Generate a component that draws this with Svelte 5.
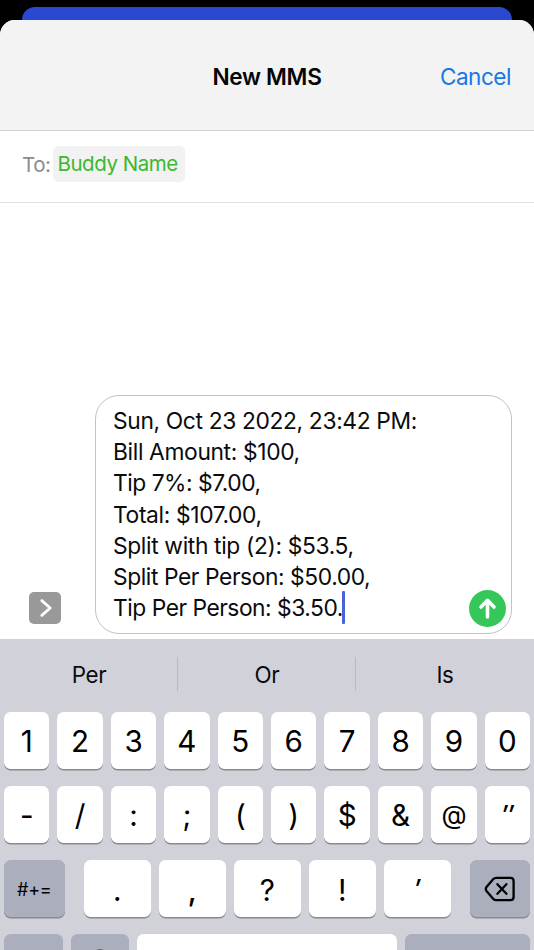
<script lang="ts">
    let message = [
        'Sun, Oct 23 2022, 23:42 PM:',
        'Bill Amount: $100,',
        'Tip 7%: $7.00,',
        'Total: $107.00,',
        'Split with tip (2): $53.5,',
        'Split Per Person: $50.00,',
        'Tip Per Person: $3.50.',
    ];

    let suggestions = ['Per', 'Or', 'Is'];

    let digits = ['1', '2', '3', '4', '5', '6', '7', '8', '9', '0'];
    let symbols = ['-', '/', ':', ';', '(', ')', '$', '&', '@', '″'];
    let punctuation = ['.', ',', '?', '!', '′'];
</script>

<main>
    <div class="behind"></div>

    <section class="sheet">
        <header>
            <span></span>
            <h1>New MMS</h1>
            <button class="cancel">Cancel</button>
        </header>

        <div class="recipient">
            <span class="to">To:</span>
            <span class="chip">Buddy Name</span>
        </div>

        <div class="compose">
            <button class="expand" aria-label="Show apps">
                <svg width="32" height="32" viewBox="0 0 32 32">
                    <path d="M12.8 8.6L21.2 16L12.8 23.4" fill="none" stroke="#fff" stroke-width="2.8" stroke-linecap="round" stroke-linejoin="round" />
                </svg>
            </button>

            <div class="bubble">
                <div class="text">
                    {#each message as line, i}
                        <p class="line">{line}{#if i == message.length - 1}<i class="caret"></i>{/if}</p>
                    {/each}
                </div>
                <button class="send" aria-label="Send">
                    <svg width="37" height="37" viewBox="0 0 37 37">
                        <path d="M18.5 27V11M12 17L18.5 10.3L25 17" fill="none" stroke="#fff" stroke-width="3.6" stroke-linecap="round" stroke-linejoin="round" />
                    </svg>
                </button>
            </div>
        </div>
    </section>

    <section class="keyboard">
        <div class="suggestions">
            {#each suggestions as word}
                <span>{word}</span>
            {/each}
        </div>

        <div class="row">
            {#each digits as key}
                <button class="key">{key}</button>
            {/each}
        </div>

        <div class="row">
            {#each symbols as key}
                <button class="key" class:at={key == '@'} class:tick={key == '″'}>{key}</button>
            {/each}
        </div>

        <div class="row">
            <button class="key dark shift">#+=</button>
            <div class="middle">
                {#each punctuation as key}
                    <button class="key low" class:comma={key == ','} class:tick={key == '′'}>{key}</button>
                {/each}
            </div>
            <button class="key dark delete" aria-label="Delete">
                <svg width="32" height="28" viewBox="0 0 32 28">
                    <path d="M12.2 2.9H26.4Q29.6 2.9 29.6 6.1V21.9Q29.6 25.1 26.4 25.1H12.2Q10.5 25.1 9.3 23.9L2.5 16Q1.1 14 2.5 12L9.3 4.1Q10.5 2.9 12.2 2.9Z" />
                    <path d="M13.4 9.2L22.4 18.8M22.4 9.2L13.4 18.8" />
                </svg>
            </button>
        </div>

        <div class="row">
            <button class="key dark letters" aria-label="Letters"></button>
            <button class="key dark emoji" aria-label="Emoji">
                <svg width="28" height="28" viewBox="0 0 28 28">
                    <circle cx="14" cy="14" r="12.5" />
                </svg>
            </button>
            <button class="key" aria-label="Space"></button>
            <button class="key dark return" aria-label="Return"></button>
        </div>
    </section>
</main>

<style>
    :global(body) {
        margin: 0;
        overflow: hidden;
        background-color: #000;
    }

    main {
        width: 534px;
        height: 950px;
        overflow: hidden;

        display: flex;
        flex-direction: column;

        background-color: #000;
        font-family: Inter, sans-serif;
        color: #0b0b0d;
    }

    button {
        border: none;
        padding: 0;
        font-family: inherit;
        color: inherit;
    }

    svg {
        display: block;
    }

    .behind {
        flex: none;
        height: 13px;
        margin: 7px 22px 0;
        border-radius: 13px 13px 0 0;
        background-color: #2a49d0;
    }

    .sheet {
        flex: none;
        box-sizing: border-box;
        height: 619px;
        display: flex;
        flex-direction: column;
        border-radius: 15px 15px 0 0;
        overflow: hidden;
        background-color: #fff;
    }

    header {
        box-sizing: border-box;
        height: 111px;
        padding: 3px 23px 0;

        display: grid;
        grid-template-columns: 1fr auto 1fr;
        align-items: center;

        background-color: #f3f3f3;
        border-bottom: 1px solid #d2d2d4;
    }

    h1 {
        margin: 0;
        font-size: 22.6px;
        font-weight: 600;
        letter-spacing: -0.3px;
        color: #050505;
    }

    .cancel {
        justify-self: end;
        background: none;
        font-size: 22.6px;
        letter-spacing: -0.5px;
        color: #1a78e4;
    }

    .recipient {
        box-sizing: border-box;
        height: 72px;
        padding: 0 22px 5px 22px;

        display: flex;
        align-items: center;
        gap: 3px;

        border-bottom: 1px solid #e0e0e0;
        font-size: 20.5px;
        letter-spacing: -0.45px;
    }

    .to {
        color: #8a8a8e;
    }

    .chip {
        box-sizing: border-box;
        height: 36px;
        padding: 0 7px 0 4px;
        line-height: 36px;
        border-radius: 5px;
        background-color: #f2f2f2;
        color: #3ab92f;
        white-space: nowrap;
    }

    .compose {
        flex: 1;
        display: flex;
        align-items: flex-end;
        gap: 34px;
        padding: 0 22px 5px 29px;
    }

    .expand {
        width: 32px;
        height: 32px;
        margin-bottom: 10px;
        border-radius: 5px;
        background-color: #999;
    }

    .bubble {
        flex: 1;
        box-sizing: border-box;
        height: 239px;
        padding: 9px 5px 6px 17px;

        display: flex;
        align-items: flex-end;
        justify-content: space-between;

        border: 1.4px solid #c2c2c4;
        border-radius: 24px;
    }

    .text {
        align-self: flex-start;
    }

    .line {
        margin: 0;
        height: 31.2px;
        line-height: 31.2px;
        font-size: 22.8px;
        letter-spacing: -0.36px;
        white-space: pre;
    }

    .line:nth-child(3),
    .line:nth-child(7) {
        letter-spacing: -0.48px;
    }

    .line:nth-child(6) {
        letter-spacing: -0.42px;
    }

    .caret {
        display: inline-block;
        width: 3px;
        height: 33px;
        margin: -6px 0 -3px -1px;
        vertical-align: middle;
        border-radius: 1px;
        background-color: #4a63dc;
        transform: translateY(-1px);
    }

    .send {
        width: 37px;
        height: 37px;
        border-radius: 50%;
        background-color: #35c759;
    }

    .keyboard {
        flex: none;
        background-color: #d1d2d9;
    }

    .suggestions {
        height: 73px;
        display: grid;
        grid-template-columns: 178px 178px 178px;
        align-items: center;
    }

    .suggestions span {
        height: 34px;
        margin-bottom: 3px;
        line-height: 36px;
        text-align: center;
        font-size: 22.4px;
        letter-spacing: -0.4px;
    }

    .suggestions span + span {
        box-shadow: -1px 0 0 #b9bac1;
    }

    .row {
        height: 57px;
        margin-bottom: 17px;
        padding: 0 4px;
        display: flex;
        gap: 8px;
    }

    .key {
        flex: 1;
        min-width: 0;
        box-sizing: border-box;
        height: 57px;
        padding-top: 1px;

        display: flex;
        align-items: center;
        justify-content: center;

        border-radius: 6.5px;
        background-color: #fff;
        box-shadow: 0 1.5px 0 #898a8f;

        font-size: 29.6px;
        line-height: 36px;
        color: #000;
    }

    .middle {
        flex: 1;
        display: flex;
        gap: 8.4px;
        margin: 0 11.5px;
    }

    .low {
        padding-top: 2px;
    }

    .comma {
        font-weight: 500;
    }

    .at {
        padding-top: 0;
        font-size: 26px;
    }

    .tick {
        padding-top: 0;
        font-size: 26px;
        font-style: italic;
        font-weight: 500;
    }

    .dark {
        background-color: #abafbd;
    }

    .shift {
        flex: none;
        width: 60.5px;
        padding-top: 2px;
        font-size: 18px;
        letter-spacing: -0.2px;
    }

    .delete {
        flex: none;
        width: 60px;
    }

    .delete svg {
        fill: none;
        stroke: #000;
        stroke-width: 2.3;
        stroke-linecap: round;
        stroke-linejoin: round;
    }

    .letters,
    .emoji {
        flex: none;
        width: 58.6px;
    }

    .emoji svg {
        fill: none;
        stroke: #111;
        stroke-width: 2.2;
    }

    .return {
        flex: none;
        width: 125px;
    }
</style>
